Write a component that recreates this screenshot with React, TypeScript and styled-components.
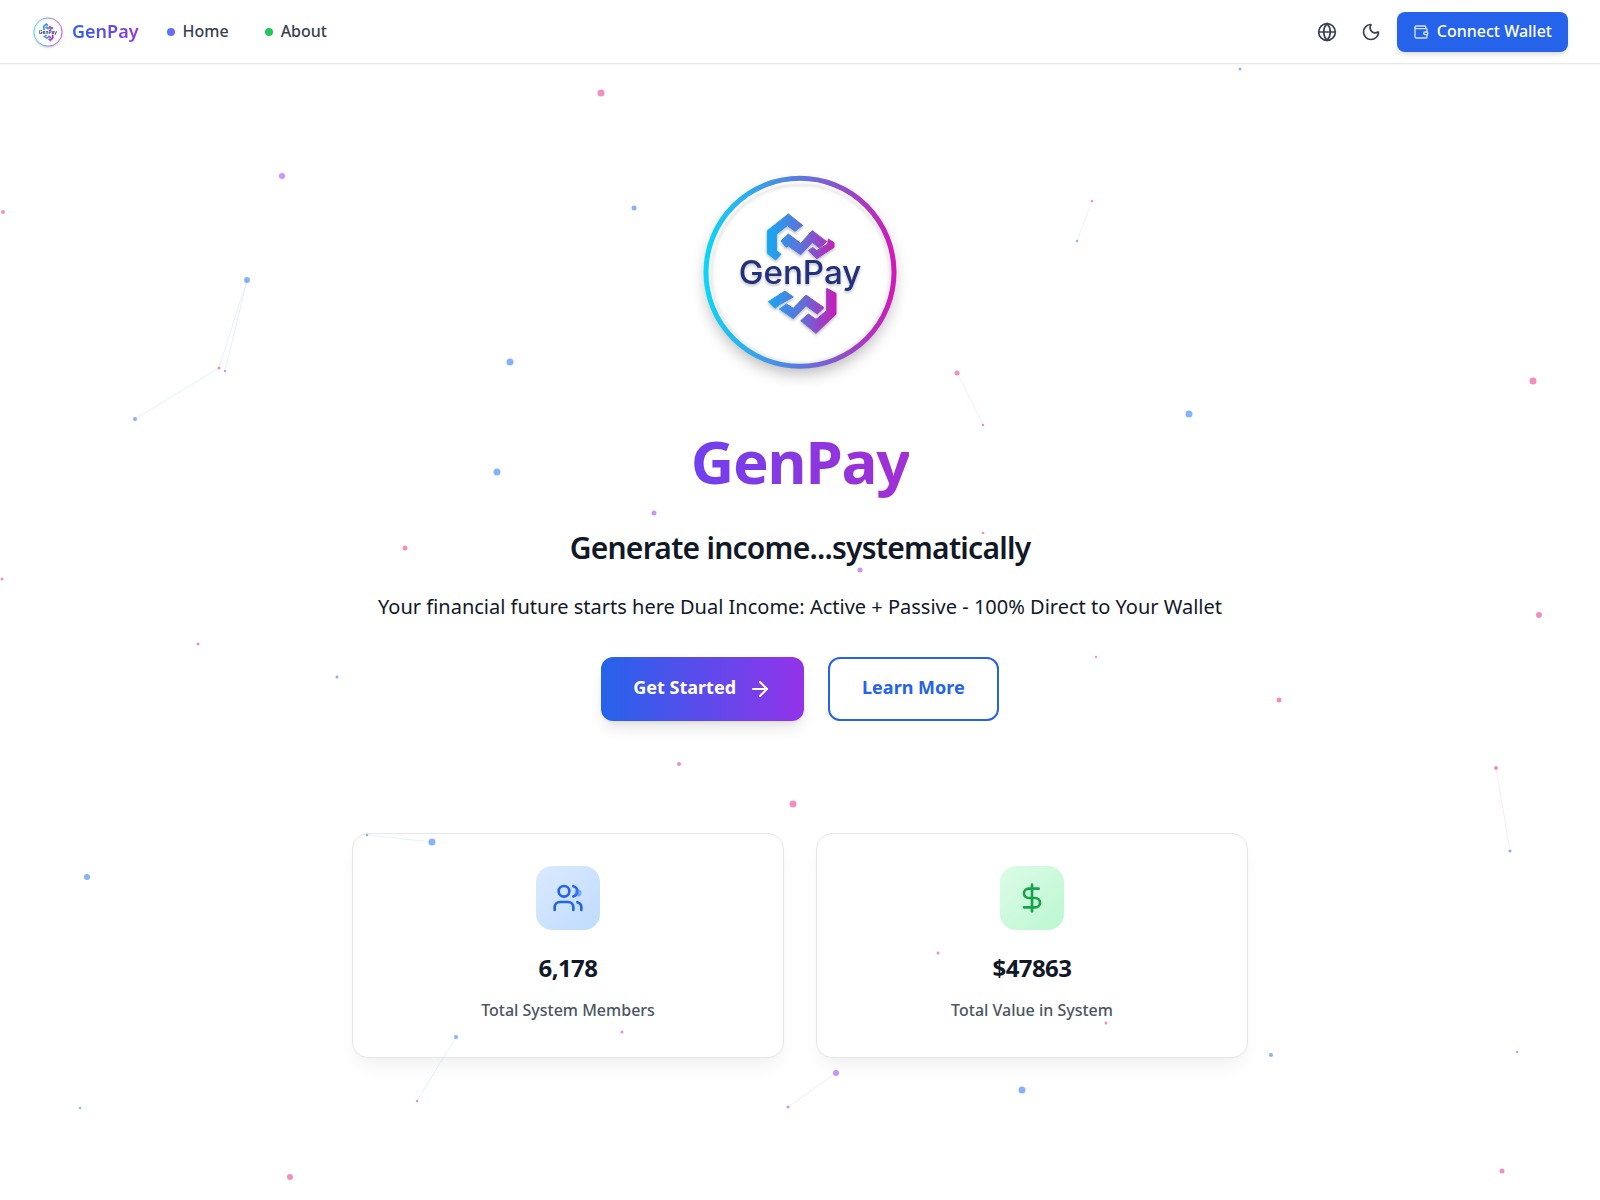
import React from 'react'
import styled, { createGlobalStyle } from 'styled-components'
import { ArrowRight, DollarSign, Globe, Moon, Users, Wallet } from 'lucide-react'

const GlobalStyle = createGlobalStyle`
  html, body { margin: 0; padding: 0; background: #fff; }
  body { font-family: "Noto Sans", "Open Sans", sans-serif; color: #111827; }
  * { box-sizing: border-box; }
`

const BLUE = '#3b82f6'
const PINK = '#ec4899'
const PURPLE = '#a855f7'

// [x, y, radius, colour]
const dots: [number, number, number, string][] = [
  [601, 93, 3.5, PINK], [1240, 69, 1.5, BLUE], [282, 176, 3, PURPLE], [3, 212, 2, PINK],
  [634, 208, 2.5, BLUE], [247, 280, 3, BLUE], [219, 368, 1.5, PINK], [225, 371, 1.2, PURPLE],
  [135, 419, 2, BLUE], [510, 362, 3.5, BLUE], [957, 373, 2.5, PINK], [983, 425, 1.2, PINK],
  [1189, 414, 3.5, BLUE], [1533, 381, 3.5, PINK], [1092, 201, 1.2, PINK], [1077, 241, 1.2, BLUE],
  [497, 472, 3.5, BLUE], [654, 513, 2.5, PURPLE], [405, 548, 2.5, PINK], [983, 533, 1.3, PINK],
  [860, 570, 2.5, PURPLE], [2, 579, 1.5, PINK], [1539, 615, 3, PINK], [198, 644, 1.5, PINK],
  [337, 677, 1.5, BLUE], [1096, 657, 1.2, PINK], [1279, 700, 2.5, PINK], [679, 764, 2, PINK],
  [793, 804, 3.5, PINK], [1496, 768, 2, PINK], [1510, 851, 1.5, BLUE], [367, 835, 1.2, BLUE],
  [432, 842, 3.5, BLUE], [87, 877, 3, BLUE], [938, 953, 1.5, PINK], [622, 1032, 1.5, PINK],
  [1106, 1023, 1.5, PINK], [456, 1037, 2, BLUE], [1271, 1055, 2, BLUE], [1517, 1052, 1.2, BLUE],
  [417, 1101, 1.2, PINK], [836, 1073, 3, PURPLE], [788, 1107, 1.5, PURPLE], [1022, 1090, 3.5, BLUE],
  [80, 1108, 1.2, BLUE], [290, 1177, 3, PINK], [1502, 1171, 2.5, PINK], [578, 893, 3.5, BLUE],
]

const links: [number, number, number, number, string][] = [
  [247, 280, 219, 368, BLUE], [247, 280, 225, 371, BLUE], [219, 368, 135, 419, BLUE],
  [957, 373, 983, 425, PINK], [1092, 201, 1077, 241, PINK], [367, 835, 432, 842, BLUE],
  [1496, 768, 1510, 851, PINK], [456, 1037, 417, 1101, BLUE], [836, 1073, 788, 1107, PURPLE],
]

const Particles = () => (
  <ParticleLayer viewBox="0 0 1600 1200" aria-hidden="true">
    {links.map(([x1, y1, x2, y2, c], i) => (
      <line key={i} x1={x1} y1={y1} x2={x2} y2={y2} stroke={c} strokeOpacity={0.12} strokeWidth={1} />
    ))}
    {dots.map(([x, y, r, c], i) => (
      <circle key={i} cx={x} cy={y} r={r} fill={c} opacity={0.62} />
    ))}
  </ParticleLayer>
)

const Logo = ({ name, size }: { name: string; size: number }) => (
  <LogoMark viewBox="60 36 600 600" width={size} height={size} role="img" aria-label="GenPay logo">
    <defs>
      <linearGradient id={`${name}-ring`} gradientUnits="userSpaceOnUse" x1="76" y1="336" x2="640" y2="336">
        <stop offset="0" stopColor="#0bd6f7" />
        <stop offset="0.5" stopColor="#5a79de" />
        <stop offset="1" stopColor="#d01ab8" />
      </linearGradient>
      <linearGradient id={`${name}-mark`} gradientUnits="userSpaceOnUse" x1="262" y1="330" x2="468" y2="330">
        <stop offset="0" stopColor="#17a9f2" />
        <stop offset="0.5" stopColor="#5f70d8" />
        <stop offset="1" stopColor="#c61eb6" />
      </linearGradient>
      <filter id={`${name}-shadow`} x="-25%" y="-25%" width="150%" height="160%">
        <feDropShadow dx="0" dy="22" stdDeviation="22" floodColor="#000" floodOpacity="0.28" />
      </filter>
      <filter id={`${name}-soft`} x="-20%" y="-20%" width="140%" height="140%">
        <feDropShadow dx="0" dy="5" stdDeviation="5" floodColor="#000" floodOpacity="0.28" />
      </filter>
      <filter id={`${name}-blur`} x="-10%" y="-10%" width="120%" height="120%">
        <feGaussianBlur stdDeviation="5" />
      </filter>
    </defs>
    <circle cx="360" cy="337" r="282" fill="#fff" filter={`url(#${name}-shadow)`} />
    <circle cx="362" cy="342" r="268" fill="none" stroke="#000" strokeOpacity="0.14" strokeWidth="6" filter={`url(#${name}-blur)`} />
    <circle cx="360" cy="337" r="282" fill="none" stroke={`url(#${name}-ring)`} strokeWidth="15" />
    <g fill={`url(#${name}-mark)`} stroke={`url(#${name}-mark)`} strokeWidth="3" filter={`url(#${name}-soft)`}>
      <path d="M262 212 325 162 368 196 345 214 322 197 290 222V272L303 283 287 300 262 280Z" />
      <path d="M303 243 325 222 362 250 397 212 440 245 418 264 397 247 362 284 325 258 318 262Z" />
      <path d="M385 272 410 296 462 262V248L445 237 443 252 410 272 398 262Z" />
      <path d="M265 425 315 393 340 411 300 433 285 445Z" />
      <path d="M298 447 320 432 340 445 378 405 432 443 412 462 378 437 340 476Z" />
      <path d="M440 385 468 400V462L408 520 362 482 385 462 408 478 440 452Z" />
    </g>
    <LogoText x="360" y="372" textAnchor="middle" textLength="368" lengthAdjust="spacingAndGlyphs" filter={`url(#${name}-soft)`}>
      GenPay
    </LogoText>
  </LogoMark>
)

const stats = [
  { icon: Users, tone: 'blue', value: '6,178', label: 'Total System Members' },
  { icon: DollarSign, tone: 'green', value: '$47863', label: 'Total Value in System' },
] as const

export default function App() {
  return (
    <Page>
      <GlobalStyle />
      <Particles />
      <Header>
        <Brand>
          <Logo name="nav" size={30} />
          <BrandName>GenPay</BrandName>
        </Brand>
        <NavLink><NavDot $tone="blue" />Home</NavLink>
        <NavLink><NavDot $tone="green" />About</NavLink>
        <HeaderActions>
          <IconButton aria-label="Language"><Globe size={20} /></IconButton>
          <IconButton aria-label="Theme"><Moon size={20} /></IconButton>
          <ConnectButton><WalletIcon size={16} />Connect Wallet</ConnectButton>
        </HeaderActions>
      </Header>
      <Hero>
        <Logo name="hero" size={200} />
        <Title>GenPay</Title>
        <Subtitle>Generate income...systematically</Subtitle>
        <Lead>Your financial future starts here Dual Income: Active + Passive - 100% Direct to Your Wallet</Lead>
        <Actions>
          <PrimaryButton>Get Started<ArrowRight size={24} /></PrimaryButton>
          <OutlineButton>Learn More</OutlineButton>
        </Actions>
        <Stats>
          {stats.map(({ icon: Icon, tone, value, label }) => (
            <StatCard key={label}>
              <StatIcon $tone={tone}><Icon size={32} /></StatIcon>
              <StatValue>{value}</StatValue>
              <StatLabel>{label}</StatLabel>
            </StatCard>
          ))}
        </Stats>
      </Hero>
    </Page>
  )
}

const Page = styled.div`
  position: relative;
  width: 100%;
  height: 1200px;
  overflow: hidden;
  background: #fff;
`

const ParticleLayer = styled.svg`
  position: absolute;
  inset: 0;
  width: 100%;
  height: 100%;
  pointer-events: none;
  z-index: 2;
`

const LogoMark = styled.svg`
  display: block;
  flex: none;
  overflow: visible;
`

const LogoText = styled.text`
  font-family: Inter, "Noto Sans", sans-serif;
  font-size: 96px;
  font-weight: 500;
  fill: #23307a;
`

const Header = styled.header`
  position: relative;
  z-index: 1;
  display: flex;
  align-items: center;
  height: 64px;
  padding: 0 32px 0 33px;
  border-bottom: 1px solid #e5e7eb;
  box-shadow: 0 1px 2px rgba(0, 0, 0, 0.04);
  line-height: 24px;
`

const Brand = styled.div`
  display: flex;
  align-items: center;
  gap: 9px;
  margin-right: 28px;
`

const BrandName = styled.span`
  font-size: 18px;
  line-height: 28px;
  margin-top: -2px;
  font-weight: 600;
  background: linear-gradient(to right, #2563eb, #9333ea);
  -webkit-background-clip: text;
  background-clip: text;
  color: transparent;
`

const NavLink = styled.a`
  display: flex;
  align-items: center;
  gap: 8px;
  margin-top: -2px;
  margin-right: 36px;
  font-size: 16px;
  font-weight: 500;
  color: #374151;
`

const NavDot = styled.span<{ $tone: 'blue' | 'green' }>`
  width: 8px;
  height: 8px;
  margin-top: 2px;
  border-radius: 50%;
  background: ${({ $tone }) => ($tone === 'blue' ? 'linear-gradient(to right, #3b82f6, #8b5cf6)' : '#22c55e')};
`

const HeaderActions = styled.div`
  display: flex;
  align-items: center;
  gap: 4px;
  margin-left: auto;
`

const IconButton = styled.button`
  display: flex;
  align-items: center;
  justify-content: center;
  width: 40px;
  height: 40px;
  padding: 0;
  border: 0;
  background: none;
  color: #374151;
`

const ConnectButton = styled.button`
  display: flex;
  align-items: center;
  gap: 8px;
  height: 40px;
  margin-left: 2px;
  padding: 0 16px 2px;
  border: 0;
  border-radius: 8px;
  background: #2563eb;
  color: #fff;
  font-family: inherit;
  font-size: 16px;
  font-weight: 500;
  box-shadow: 0 4px 6px -1px rgba(0, 0, 0, 0.1), 0 2px 4px -2px rgba(0, 0, 0, 0.1);
`

const WalletIcon = styled(Wallet)`
  opacity: 0.8;
  margin-top: 2px;
`

const Hero = styled.main`
  position: relative;
  z-index: 1;
  display: flex;
  flex-direction: column;
  align-items: center;
  padding-top: 108px;
`

const Title = styled.h1`
  margin: 52px 0 0;
  font-size: 60px;
  line-height: 1.25;
  font-weight: 700;
  letter-spacing: -1.2px;
  background: linear-gradient(to right, #7040ee, #a22fd4);
  -webkit-background-clip: text;
  background-clip: text;
  color: transparent;
`

const Subtitle = styled.h2`
  margin: 31px 0 0;
  font-size: 30px;
  line-height: 36px;
  font-weight: 600;
  letter-spacing: -0.75px;
  color: #111827;
`

const Lead = styled.p`
  margin: 27px 0 0;
  font-size: 20px;
  line-height: 28px;
  color: #111827;
`

const Actions = styled.div`
  display: flex;
  gap: 24px;
  margin-top: 36px;
`

const PrimaryButton = styled.button`
  display: flex;
  align-items: center;
  gap: 12px;
  height: 64px;
  padding: 0 32px 4px;
  border: 0;
  border-radius: 12px;
  background: linear-gradient(to right, #2563eb, #9333ea);
  color: #fff;
  font-family: inherit;
  font-size: 18px;
  font-weight: 700;
  box-shadow: 0 10px 15px -3px rgba(0, 0, 0, 0.1), 0 4px 6px -4px rgba(0, 0, 0, 0.1);

  svg {
    margin-top: 4px;
  }
`

const OutlineButton = styled.button`
  height: 64px;
  padding: 0 32px 4px;
  border: 2px solid #2563eb;
  border-radius: 12px;
  background: #fff;
  color: #2563eb;
  font-family: inherit;
  font-size: 18px;
  font-weight: 700;
`

const Stats = styled.section`
  display: grid;
  grid-template-columns: repeat(2, 1fr);
  gap: 32px;
  width: 896px;
  margin-top: 112px;
`

const StatCard = styled.article`
  display: flex;
  flex-direction: column;
  align-items: center;
  height: 225px;
  padding: 32px;
  border: 1px solid #e5e7eb;
  border-radius: 16px;
  background: #fff;
  box-shadow: 0 12px 20px -4px rgba(0, 0, 0, 0.05), 0 4px 8px -4px rgba(0, 0, 0, 0.04);
`

const StatIcon = styled.div<{ $tone: 'blue' | 'green' }>`
  display: flex;
  align-items: center;
  justify-content: center;
  width: 64px;
  height: 64px;
  border-radius: 16px;
  background: ${({ $tone }) =>
    $tone === 'blue' ? 'linear-gradient(135deg, #dbeafe, #bfdbfe)' : 'linear-gradient(135deg, #dcfce7, #bbf7d0)'};
  color: ${({ $tone }) => ($tone === 'blue' ? '#2563eb' : '#16a34a')};
`

const StatValue = styled.div`
  margin-top: 22px;
  font-size: 24px;
  line-height: 32px;
  font-weight: 700;
  letter-spacing: -0.6px;
  color: #111827;
`

const StatLabel = styled.div`
  margin-top: 14px;
  font-size: 16px;
  line-height: 24px;
  font-weight: 500;
  color: #4b5563;
`
